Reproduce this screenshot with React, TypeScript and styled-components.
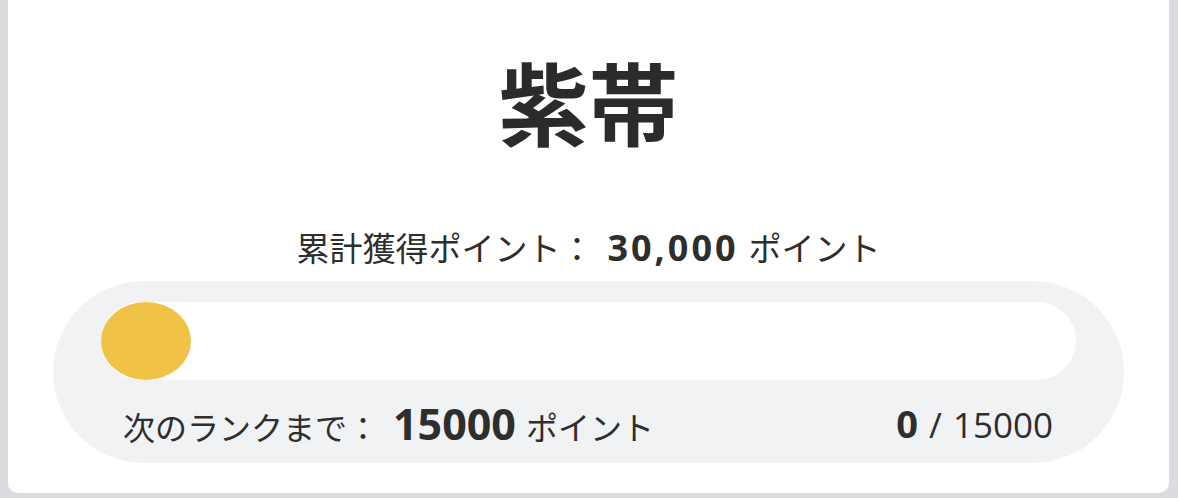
import React from "react";
import styled, { createGlobalStyle } from "styled-components";

const Global = createGlobalStyle`
  html, body {
    margin: 0;
    padding: 0;
    background: #dcdce0;
  }
  body {
    font-family: "Open Sans", "Noto Sans CJK JP", sans-serif;
    color: #2e2e2e;
  }
`;

const Page = styled.div`
  width: 1178px;
  height: 498px;
  padding: 0 9px 5px 8px;
  box-sizing: border-box;
  overflow: hidden;
`;

const Card = styled.section`
  background: #ffffff;
  height: 493px;
  border-radius: 0 0 10px 10px;
  box-sizing: border-box;
  padding: 53px 45px 0;
  display: flex;
  flex-direction: column;
  align-items: stretch;
`;

const Title = styled.h1`
  margin: 0;
  font-family: "Noto Sans CJK JP", sans-serif;
  font-weight: 700;
  font-size: 90px;
  line-height: 94px;
  text-align: center;
  color: #2b2b2b;
`;

const Total = styled.p`
  margin: 80px 0 0;
  font-size: 33px;
  line-height: 40px;
  text-align: center;
  font-family: "Noto Sans CJK JP", sans-serif;
`;

const Num = styled.strong<{ $size: number; $spacing?: number }>`
  font-family: "Open Sans", "Noto Sans CJK JP", sans-serif;
  font-weight: 700;
  font-size: ${(p) => p.$size}px;
  letter-spacing: ${(p) => p.$spacing ?? 0}px;
  margin: 0 10px 0 14px;
`;

const Track = styled.div`
  margin-top: 13px;
  background: #f1f2f4;
  border-radius: 91px;
  height: 182px;
  box-sizing: border-box;
  padding: 21px 48px 0;
  display: flex;
  flex-direction: column;
`;

const Bar = styled.div`
  height: 78px;
  background: #ffffff;
  border-radius: 39px;
  display: flex;
`;

const Fill = styled.div`
  height: 100%;
  background: #f0c245;
  border-radius: 50%;
`;

const Footer = styled.div`
  display: flex;
  justify-content: space-between;
  align-items: center;
  height: 44px;
  margin-top: 21px;
  padding: 0 23px 0 22px;
  font-family: "Noto Sans CJK JP", sans-serif;
  font-size: 32px;
`;

const Label = styled.span`
  display: flex;
  align-items: baseline;
`;

const Ratio = styled.span`
  font-family: "Open Sans", sans-serif;
  font-size: 35px;
  display: flex;
  align-items: baseline;
  gap: 11px;
`;

const RatioStrong = styled.strong`
  font-weight: 700;
  font-size: 38px;
`;

export default function App() {
  const current = 0;
  const goal = 15000;
  const pct = current / goal;
  return (
    <>
      <Global />
      <Page>
        <Card>
          <Title>紫帯</Title>
          <Total>
            累計獲得ポイント：<Num $size={36} $spacing={3}>30,000</Num>ポイント
          </Total>
          <Track>
            <Bar>
              <Fill style={{ width: `max(90px, ${pct * 100}%)` }} />
            </Bar>
            <Footer>
              <Label>
                次のランクまで：<Num $size={43}>15000</Num>ポイント
              </Label>
              <Ratio>
                <RatioStrong>{current}</RatioStrong>/<span>{goal}</span>
              </Ratio>
            </Footer>
          </Track>
        </Card>
      </Page>
    </>
  );
}
